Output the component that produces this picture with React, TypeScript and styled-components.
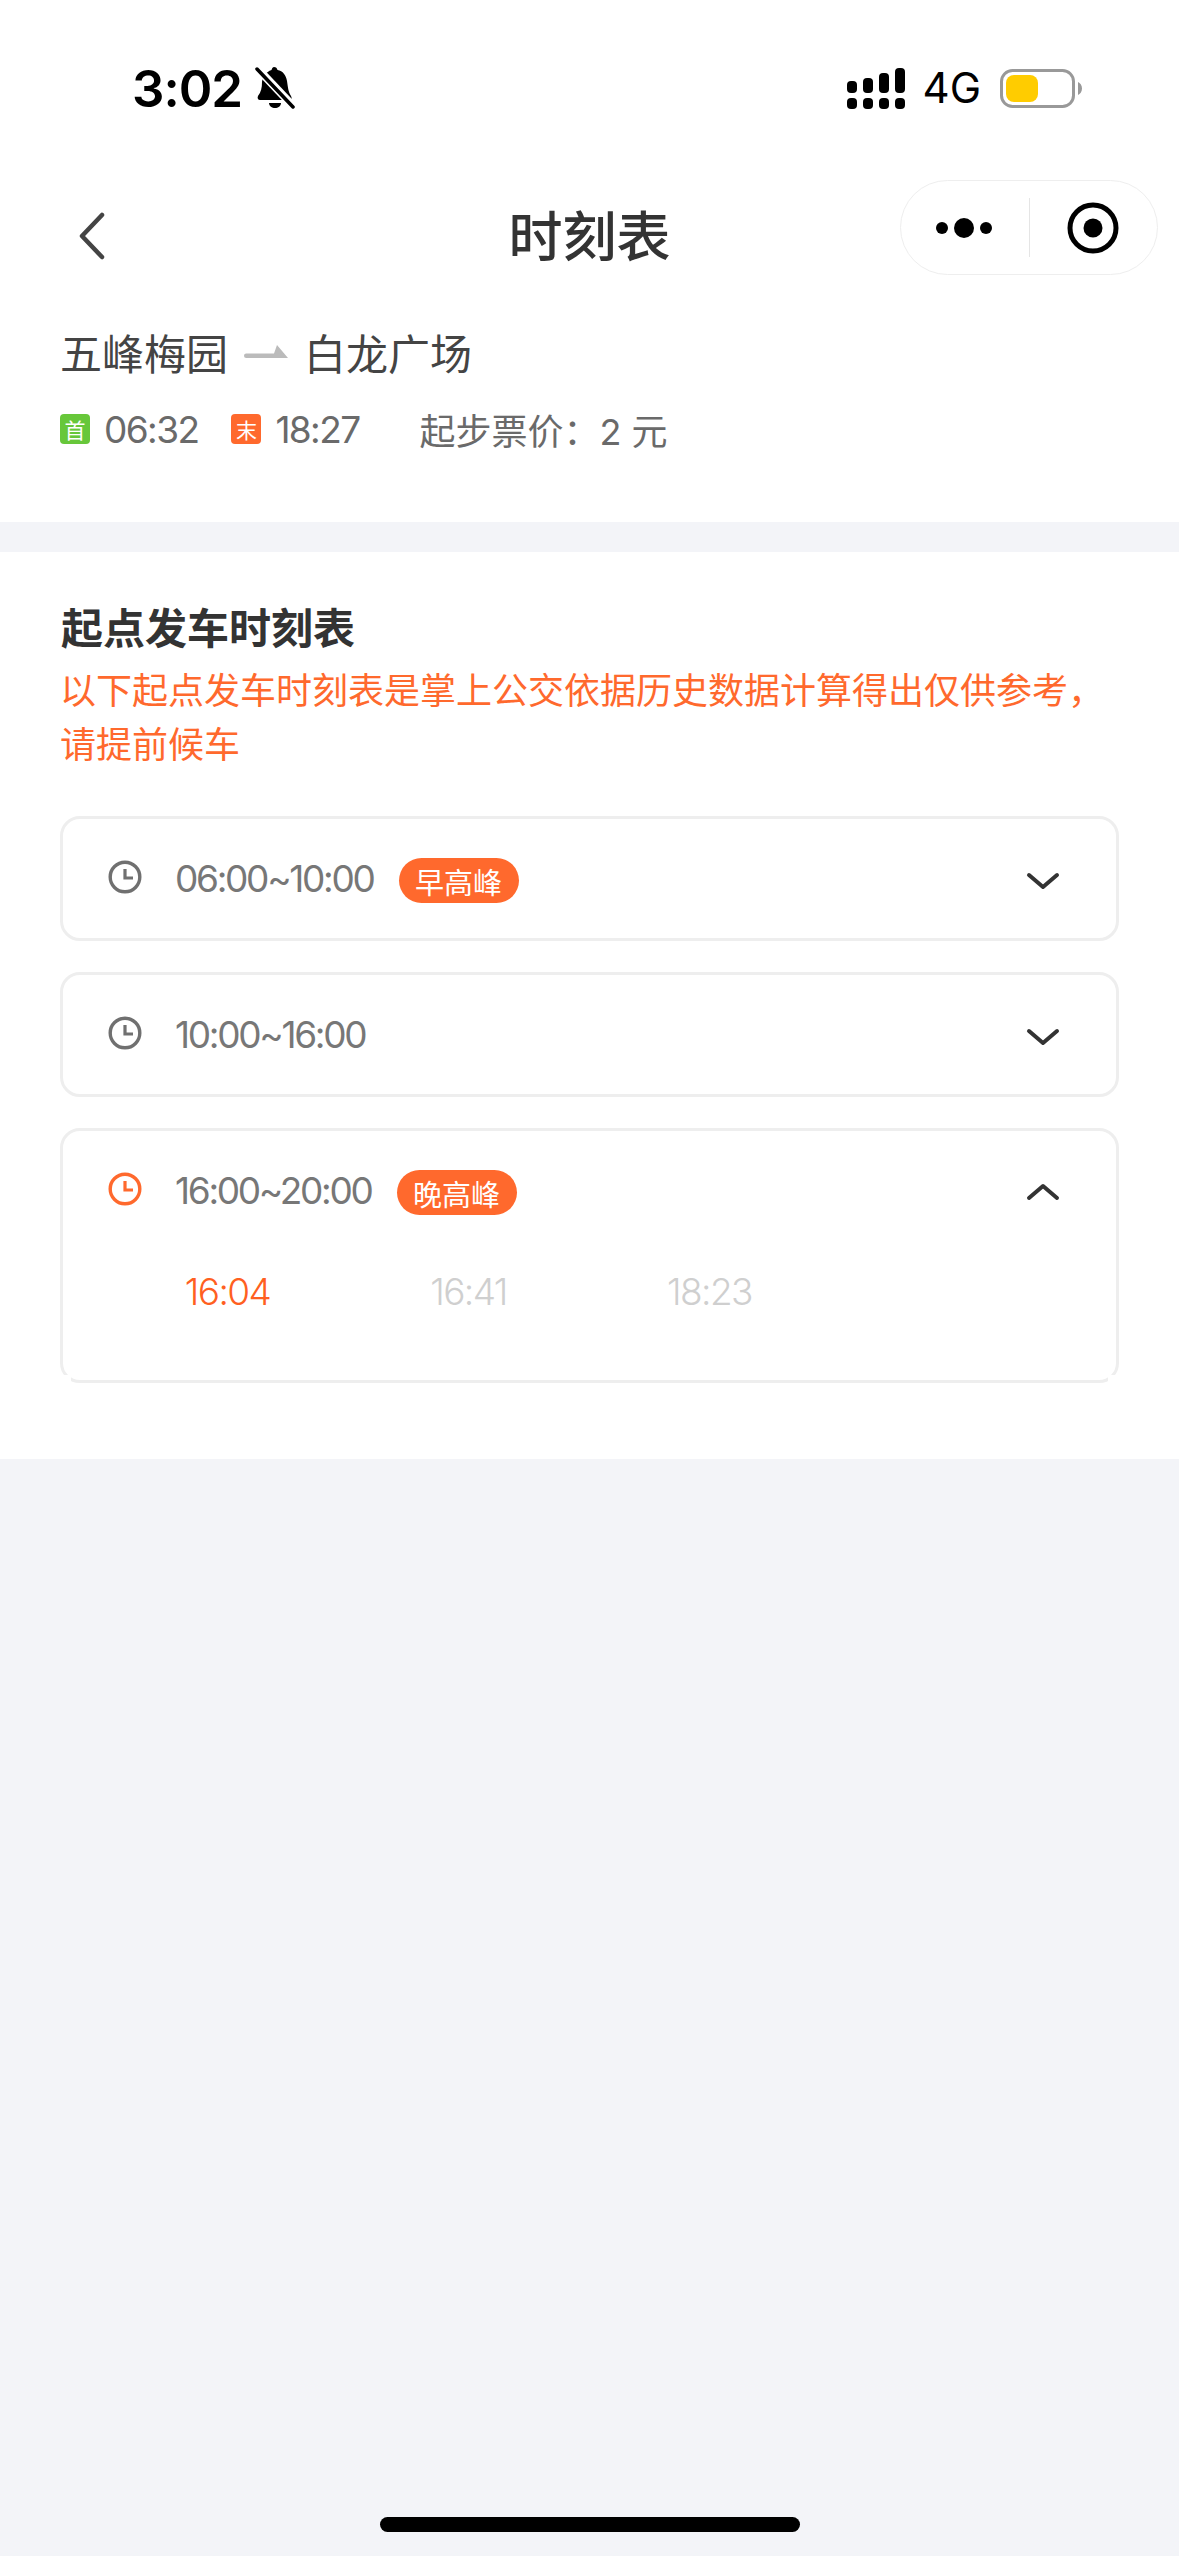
import React from "react";
import styled, { createGlobalStyle } from "styled-components";

const FONT = `Inter, "Noto Sans CJK SC", sans-serif`;
const ORANGE = "#ff692d";

interface Period {
  range: string;
  tag?: string;
  open?: boolean;
  times?: string[];
}

const periods: Period[] = [
  { range: "06:00~10:00", tag: "早高峰" },
  { range: "10:00~16:00" },
  { range: "16:00~20:00", tag: "晚高峰", open: true, times: ["16:04", "16:41", "18:23"] },
];

const GlobalStyle = createGlobalStyle`
  html, body {
    margin: 0;
    padding: 0;
    background: #f3f4f8;
  }
`;

const Page = styled.div`
  position: relative;
  width: 1179px;
  height: 2556px;
  overflow: hidden;
  background: #f3f4f8;
  font-family: ${FONT};
`;

const TopPanel = styled.div`
  background: #fff;
  height: 522px;
  margin-bottom: 30px;
`;

const StatusBar = styled.div`
  display: flex;
  align-items: center;
  box-sizing: border-box;
  height: 132px;
  padding: 44px 97px 0 132px;
  color: #000;
`;

const Clock = styled.span`
  font-size: 51px;
  font-weight: 600;
  line-height: 1;
  letter-spacing: -1px;
  width: 123px;
`;

const StatusRight = styled.div`
  margin-left: auto;
  display: flex;
  align-items: center;
`;

const Network = styled.span`
  font-size: 42px;
  line-height: 1;
  margin: 0 19px 0 18px;
`;

const NavBar = styled.div`
  position: relative;
  display: flex;
  align-items: center;
  justify-content: center;
  height: 105px;
  margin-top: 53px;
`;

const BackButton = styled.svg`
  position: absolute;
  left: 78px;
  top: 27px;
`;

const Title = styled.h1`
  margin: 0;
  font-size: 54px;
  font-weight: 500;
  color: #333;
  line-height: 1;
`;

const Capsule = styled.div`
  position: absolute;
  left: 900px;
  top: -5px;
  box-sizing: border-box;
  width: 258px;
  height: 95px;
  border: 1px solid #eee;
  border-radius: 48px;
  display: flex;
  align-items: center;
`;

const CapsuleSide = styled.div`
  flex: 1;
  display: flex;
  align-items: center;
  justify-content: center;
`;

const CapsuleDivider = styled.div`
  width: 1px;
  height: 59px;
  background: #e5e5e5;
`;

const RouteInfo = styled.div`
  padding: 0 60px;
  margin-top: 33px;
`;

const RouteRow = styled.div`
  display: flex;
  align-items: center;
  height: 56px;
  font-size: 42px;
  color: #444;
`;

const RouteArrow = styled.svg`
  margin: 0 16px;
`;

const MetaRow = styled.div`
  display: flex;
  align-items: center;
  height: 50px;
  margin-top: 25px;
  font-size: 37px;
  letter-spacing: -1.6px;
  color: #6a6a6a;
`;

const MetaBadge = styled.span<{ $color: string }>`
  display: flex;
  align-items: center;
  justify-content: center;
  width: 30px;
  height: 30px;
  border-radius: 4px;
  background: ${(p) => p.$color};
  color: #fff;
  font-size: 21px;
  letter-spacing: 0;
  margin-right: 14px;
`;

const MetaTime = styled.span`
  margin-right: 33px;
`;

const Fare = styled.span`
  margin-left: 27px;
  font-size: 36px;
  letter-spacing: 0;
  white-space: pre;
`;

const Timetable = styled.div`
  background: #fff;
  height: 907px;
  box-sizing: border-box;
  padding: 49px 60px 0;
`;

const SectionTitle = styled.h2`
  margin: 0;
  font-size: 42px;
  font-weight: 700;
  color: #333;
  line-height: 56px;
  padding-left: 1px;
`;

const Notice = styled.p`
  margin: 7px 0 0;
  font-size: 36px;
  line-height: 54px;
  color: ${ORANGE};
  width: 1056px;
`;

const CardList = styled.div`
  display: flex;
  flex-direction: column;
  gap: 31px;
  margin-top: 44px;
`;

const Card = styled.div<{ $open: boolean }>`
  position: relative;
  box-sizing: border-box;
  border: 3px solid #eee;
  border-radius: 20px;
  min-height: 125px;

  /* the open panel clips its lower corners */
  ${(p) =>
    p.$open &&
    `
    &::before,
    &::after {
      content: "";
      position: absolute;
      bottom: -3px;
      width: 11px;
      height: 8px;
      background: #fff;
    }
    &::before { left: -3px; }
    &::after { right: -3px; }
  `}
`;

const CardHead = styled.div`
  display: flex;
  align-items: center;
  height: 119px;
  padding: 0 56px 0 45px;
`;

const RowClock = styled.svg`
  margin-bottom: 4px;
`;

const RangeText = styled.span`
  font-size: 37px;
  color: #777;
  margin-left: 33px;
  letter-spacing: -2.3px;
`;

const PeakTag = styled.span`
  display: flex;
  align-items: center;
  justify-content: center;
  width: 120px;
  height: 45px;
  margin: 4px 0 0 25px;
  border-radius: 23px;
  background: ${ORANGE};
  color: #fff;
  font-size: 29px;
`;

const Chevron = styled.svg<{ $up: boolean }>`
  margin-left: auto;
  margin-top: ${(p) => (p.$up ? "0" : "6px")};
`;

const TimeGrid = styled.div`
  display: grid;
  grid-template-columns: repeat(3, 241px);
  padding: 0 0 63px 44px;
  margin-top: 17px;
`;

const TimeCell = styled.span<{ $next: boolean }>`
  text-align: center;
  font-size: 37px;
  font-weight: 300;
  line-height: 50px;
  letter-spacing: -1.6px;
  color: ${(p) => (p.$next ? "#ff5f21" : "#cfcfcf")};
`;

const HomeIndicator = styled.div`
  position: absolute;
  left: 380px;
  top: 2517px;
  width: 420px;
  height: 15px;
  border-radius: 8px;
  background: #000;
`;

const BellOff = () => (
  <svg width="40" height="44" viewBox="0 0 40 44">
    <path
      d="M19 1c2 0 3 1 3.500 3C28 5 31 9 32 15c1 6 1 10 4 15 1 2 1 4-1 4H5c-2 0-3-2-2-4 3-4 4-8 4-14 1-6 4-10 9.500-12C17 2 18 1 19 1z"
      fill="#000"
    />
    <path d="M14 37h12c0 3-3 5-6 5s-6-2-6-5z" fill="#000" />
    <path d="M2 2l36 38" stroke="#fff" strokeWidth="8" />
    <path d="M2 3l36 38" stroke="#000" strokeWidth="3.500" strokeLinecap="round" />
  </svg>
);

const SignalIcon = () => (
  <svg width="58" height="41" viewBox="0 0 58 41" fill="#000">
    <rect x="0" y="13" width="10" height="12" rx="4" />
    <rect x="16" y="10" width="10" height="15" rx="4" />
    <rect x="32" y="5" width="10" height="20" rx="4" />
    <rect x="48" y="0" width="10" height="25" rx="4" />
    <rect x="0" y="30" width="10" height="11" rx="4" />
    <rect x="16" y="30" width="10" height="11" rx="4" />
    <rect x="32" y="30" width="10" height="11" rx="4" />
    <rect x="48" y="30" width="10" height="11" rx="4" />
  </svg>
);

const BatteryIcon = () => (
  <svg width="82" height="39" viewBox="0 0 82 39">
    <rect x="1.500" y="1.500" width="72" height="36" rx="11" fill="#fff" stroke="#999" strokeWidth="3" />
    <rect x="6" y="6" width="32" height="27" rx="8" fill="#ffcc00" />
    <path d="M78 13c2 1 4 3 4 6.500s-2 5.500-4 6.500z" fill="#999" />
  </svg>
);

const ClockIcon: React.FC<{ color: string }> = ({ color }) => (
  <RowClock width="34" height="34" viewBox="0 0 34 34" fill="none" stroke={color} strokeWidth="3.400">
    <circle cx="17" cy="17" r="14.800" />
    <path d="M17 9v9h8" strokeWidth="3.200" />
  </RowClock>
);

const ChevronIcon: React.FC<{ up: boolean }> = ({ up }) => (
  <Chevron
    $up={up}
    width="34"
    height="20"
    viewBox="0 0 34 20"
    fill="none"
    stroke="#333"
    strokeWidth="4"
    strokeLinecap="round"
    strokeLinejoin="round"
  >
    <path d={up ? "M3 17L17 5l14 12" : "M3 3l14 12L31 3"} />
  </Chevron>
);

const App: React.FC = () => (
  <Page>
    <GlobalStyle />
    <TopPanel>
      <StatusBar>
        <Clock>3:02</Clock>
        <BellOff />
        <StatusRight>
          <SignalIcon />
          <Network>4G</Network>
          <BatteryIcon />
        </StatusRight>
      </StatusBar>
      <NavBar>
        <BackButton
          width="30"
          height="48"
          viewBox="0 0 30 48"
          fill="none"
          stroke="#444"
          strokeWidth="4.500"
          strokeLinecap="round"
          strokeLinejoin="round"
        >
          <path d="M24 3L4 24l20 21" />
        </BackButton>
        <Title>时刻表</Title>
        <Capsule>
          <CapsuleSide>
            <svg width="58" height="22" viewBox="0 0 58 22" fill="#000">
              <circle cx="6" cy="11" r="6" />
              <circle cx="28" cy="11" r="10" />
              <circle cx="50" cy="11" r="6" />
            </svg>
          </CapsuleSide>
          <CapsuleDivider />
          <CapsuleSide>
            <svg width="52" height="52" viewBox="0 0 52 52">
              <circle cx="26" cy="26" r="23" fill="none" stroke="#000" strokeWidth="5" />
              <circle cx="26" cy="26" r="9.500" fill="#000" />
            </svg>
          </CapsuleSide>
        </Capsule>
      </NavBar>
      <RouteInfo>
        <RouteRow>
          五峰梅园
          <RouteArrow width="44" height="13" viewBox="0 0 44 13" fill="#bbb">
            <path d="M0 10.700a2.200 2.200 0 0 1 2.200-2.200H30L33 0l11 13H2.200A2.200 2.200 0 0 1 0 10.700z" />
          </RouteArrow>
          白龙广场
        </RouteRow>
        <MetaRow>
          <MetaBadge $color="#67c73a">首</MetaBadge>
          <MetaTime>06:32</MetaTime>
          <MetaBadge $color={ORANGE}>末</MetaBadge>
          <MetaTime>18:27</MetaTime>
          <Fare>起步票价：2 元</Fare>
        </MetaRow>
      </RouteInfo>
    </TopPanel>
    <Timetable>
      <SectionTitle>起点发车时刻表</SectionTitle>
      <Notice>以下起点发车时刻表是掌上公交依据历史数据计算得出仅供参考，请提前候车</Notice>
      <CardList>
        {periods.map((period) => (
          <Card key={period.range} $open={!!period.open}>
            <CardHead>
              <ClockIcon color={period.open ? ORANGE : "#707070"} />
              <RangeText>{period.range}</RangeText>
              {period.tag && <PeakTag>{period.tag}</PeakTag>}
              <ChevronIcon up={!!period.open} />
            </CardHead>
            {period.times && (
              <TimeGrid>
                {period.times.map((time, i) => (
                  <TimeCell key={time} $next={i === 0}>
                    {time}
                  </TimeCell>
                ))}
              </TimeGrid>
            )}
          </Card>
        ))}
      </CardList>
    </Timetable>
    <HomeIndicator />
  </Page>
);

export default App;
